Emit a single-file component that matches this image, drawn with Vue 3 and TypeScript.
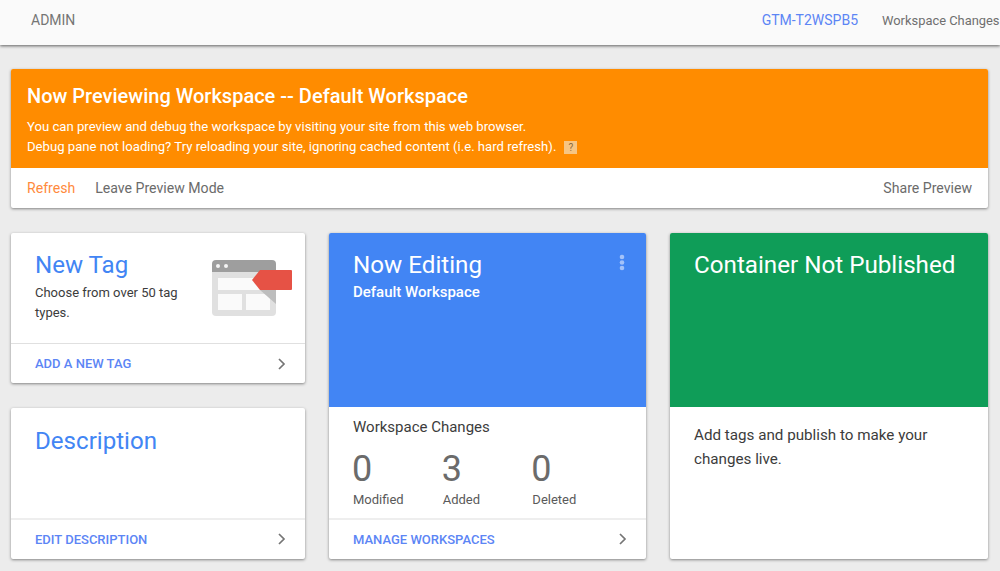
<template>
  <div class="page">
    <header class="topbar">
      <span class="admin">ADMIN</span>
      <span class="gtm">GTM-T2WSPB5</span>
      <span class="changes">Workspace Changes</span>
    </header>
    <main class="content">
      <section class="banner card">
        <div class="banner-main">
          <h1>Now Previewing Workspace -- Default Workspace</h1>
          <p>You can preview and debug the workspace by visiting your site from this web browser.</p>
          <p>Debug pane not loading? Try reloading your site, ignoring cached content (i.e. hard refresh).<span class="help">?</span></p>
        </div>
        <div class="banner-actions">
          <a class="refresh">Refresh</a>
          <a class="leave">Leave Preview Mode</a>
          <a class="share">Share Preview</a>
        </div>
      </section>

      <div class="grid">
        <div class="col-left">
          <section class="card tile">
            <div class="tile-body new-tag">
              <div class="new-tag-text">
                <h2 class="blue-title">New Tag</h2>
                <p class="body-text">Choose from over 50 tag types.</p>
              </div>
              <svg class="tag-art" width="81" height="56" viewBox="0 0 81 56">
                <path d="M1 12h64v40a4 4 0 0 1-4 4H5a4 4 0 0 1-4-4z" fill="#e0e0e0" />
                <path d="M1 12V4a4 4 0 0 1 4-4h56a4 4 0 0 1 4 4v8z" fill="#9e9e9e" />
                <circle cx="7" cy="6" r="2" fill="#f5f5f5" />
                <circle cx="15" cy="6" r="2" fill="#f5f5f5" />
                <rect x="7" y="18" width="54" height="12" fill="#fafafa" />
                <rect x="7" y="34" width="24" height="16" fill="#fafafa" />
                <rect x="35" y="34" width="24" height="16" fill="#fafafa" />
                <path d="M49 30H65V44z" fill="#bdbdbd" />
                <path d="M41 20 49 10h31a1 1 0 0 1 1 1v18a1 1 0 0 1-1 1H49z" fill="#e65245" />
              </svg>
            </div>
            <div class="tile-foot foot-a">
              <a>ADD A NEW TAG</a>
              <svg class="chev" width="10" height="14" viewBox="0 0 10 14"><path d="M2 2 7 7 2 12" fill="none" stroke="#757575" stroke-width="1.7" /></svg>
            </div>
          </section>
          <section class="card tile">
            <div class="tile-body desc-body">
              <h2 class="blue-title">Description</h2>
            </div>
            <div class="tile-foot foot-b">
              <a>EDIT DESCRIPTION</a>
              <svg class="chev" width="10" height="14" viewBox="0 0 10 14"><path d="M2 2 7 7 2 12" fill="none" stroke="#757575" stroke-width="1.7" /></svg>
            </div>
          </section>
        </div>

        <section class="card wide">
          <div class="hero hero-blue">
            <h2>Now Editing</h2>
            <div class="sub">Default Workspace</div>
            <svg class="dots" width="6" height="17" viewBox="0 0 6 17">
              <circle cx="3" cy="3" r="2.3" /><circle cx="3" cy="8.5" r="2.3" /><circle cx="3" cy="14" r="2.3" />
            </svg>
          </div>
          <div class="changes-panel">
            <div class="changes-title">Workspace Changes</div>
            <div class="stats">
              <div v-for="s in stats" :key="s.label" class="stat">
                <div class="num">{{ s.value }}</div>
                <div class="lbl">{{ s.label }}</div>
              </div>
            </div>
          </div>
          <div class="tile-foot foot-b">
            <a>MANAGE WORKSPACES</a>
            <svg class="chev" width="10" height="14" viewBox="0 0 10 14"><path d="M2 2 7 7 2 12" fill="none" stroke="#757575" stroke-width="1.7" /></svg>
          </div>
        </section>

        <section class="card wide">
          <div class="hero hero-green">
            <h2>Container Not Published</h2>
          </div>
          <p class="publish">Add tags and publish to make your changes live.</p>
        </section>
      </div>
    </main>
  </div>
</template>

<script setup lang="ts">
interface Stat {
  value: number
  label: string
}

const stats: Stat[] = [
  { value: 0, label: 'Modified' },
  { value: 3, label: 'Added' },
  { value: 0, label: 'Deleted' },
]
</script>

<style>
html, body {
  margin: 0;
  height: 100%;
  overflow: hidden;
  background: #ececec;
}
</style>

<style scoped>
.page {
  width: 1000px;
  height: 571px;
  overflow: hidden;
  background: #ececec;
  font-family: Roboto, "Liberation Sans", sans-serif;
  color: #3c4043;
}
.topbar {
  height: 45px;
  box-sizing: border-box;
  padding: 0 0 5px 31px;
  background: #fafafa;
  display: flex;
  align-items: center;
  box-shadow: 0 1px 3px rgba(0, 0, 0, 0.6);
  white-space: nowrap;
  font-size: 14px;
  position: relative;
}
.admin { color: #757575; flex: 1; }
.gtm { color: #5c85f5; margin-right: 24px; }
.changes { color: #6f6f6f; font-size: 12.9px; flex: none; width: 118px; }
.content { padding: 24px 12px 0 11px; }
.card {
  background: #fff;
  border-radius: 2px;
  box-shadow: 0 1px 3px rgba(0, 0, 0, 0.45);
  overflow: hidden;
}
.banner-main {
  background: #ff8c00;
  color: #fff;
  height: 99px;
  box-sizing: border-box;
  padding: 14px 16px 0;
}
.banner-main h1 {
  margin: 0 0 8px;
  font-size: 20px;
  font-weight: 500;
  line-height: 26px;
}
.banner-main p {
  margin: 0;
  font-size: 13.13px;
  line-height: 20px;
  display: flex;
  align-items: center;
}
.help {
  display: inline-block;
  width: 13px;
  height: 13px;
  margin-left: 8px;
  background: #f7c583;
  color: #8a6a3c;
  font-size: 10px;
  line-height: 14px;
  text-align: center;
}
.banner-actions {
  height: 40px;
  display: flex;
  align-items: center;
  padding: 0 16px;
  font-size: 14.1px;
  color: #6b6b6b;
}
.refresh { color: #ff8a3c; margin-right: 20px; }
.share { margin-left: auto; }
.grid {
  display: grid;
  grid-template-columns: 294px 317px 318px;
  column-gap: 24px;
  margin-top: 25px;
}
.col-left {
  display: flex;
  flex-direction: column;
  gap: 25px;
}
.tile {
  height: 150px;
  display: flex;
  flex-direction: column;
}
.col-left .tile:last-child { height: 151px; }
.tile-body {
  flex: 1;
  padding: 16px 24px 0;
}
.desc-body { padding-top: 17px; }
.new-tag {
  display: flex;
  justify-content: space-between;
  padding-right: 13px;
}
.new-tag-text { width: 150px; }
.tag-art { margin-top: 11px; }
.blue-title {
  margin: 0;
  font-size: 24.1px;
  font-weight: 400;
  line-height: 32px;
  color: #4285f4;
}
.body-text {
  margin: 2px 0 0;
  font-size: 13px;
  line-height: 20px;
  color: #3c3c3c;
}
.tile-foot {
  box-sizing: border-box;
  display: flex;
  align-items: center;
  justify-content: space-between;
  padding: 0 18px 0 24px;
  font-size: 13px;
  font-weight: 500;
  color: #5c85f5;
}
.foot-a { height: 40px; border-top: 1px solid #e0e0e0; }
.foot-b { height: 41px; border-top: 2px solid #eeeeee; padding-bottom: 1px; }
.wide {
  height: 326px;
  display: flex;
  flex-direction: column;
}
.hero {
  height: 174px;
  flex: none;
  padding: 16px 24px 0;
  box-sizing: border-box;
  color: #fff;
  position: relative;
}
.hero h2 {
  margin: 0;
  font-size: 24.2px;
  font-weight: 400;
  line-height: 32px;
  white-space: nowrap;
}
.hero-blue { background: #4285f4; }
.hero-green { background: #0f9d58; }
.sub {
  font-size: 15px;
  font-weight: 500;
  line-height: 20px;
  margin-top: 1px;
}
.dots {
  position: absolute;
  right: 21px;
  top: 21px;
  fill: #a3c2f9;
}
.changes-panel {
  flex: 1;
  padding: 10px 24px 0;
}
.changes-title {
  font-size: 15px;
  line-height: 20px;
  color: #3c3c3c;
}
.stats {
  display: flex;
  margin-top: 15px;
}
.stat { width: 90px; }
.num {
  font-size: 36px;
  line-height: 34px;
  color: #6b6b6b;
  margin-left: -1px;
}
.lbl {
  margin-top: 5px;
  font-size: 13px;
  line-height: 18px;
  color: #5a5a5a;
}
.publish {
  margin: 16px 24px 0;
  font-size: 15.2px;
  line-height: 24px;
  color: #3c3c3c;
}
</style>
